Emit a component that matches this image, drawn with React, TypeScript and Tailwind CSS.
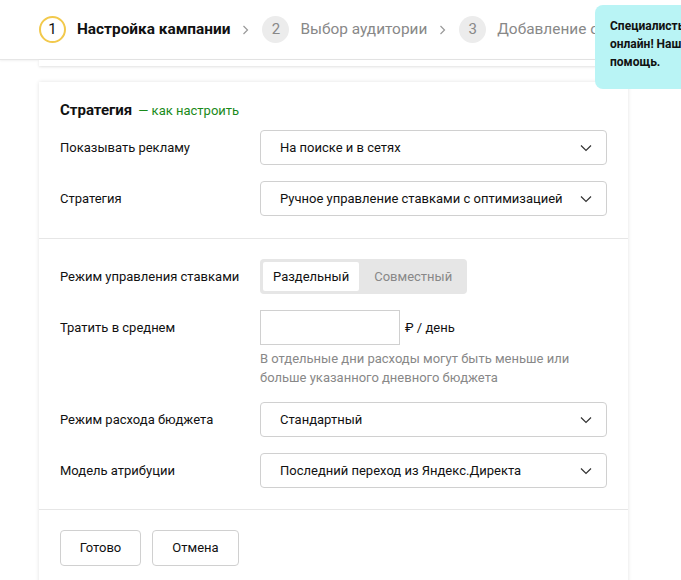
import React from 'react';

const Chevron = () => (
  <svg width="12" height="8" viewBox="0 0 12 8" fill="none" className="shrink-0">
    <path d="M1 1.5L6 6.5L11 1.5" stroke="#333" strokeWidth="1.2" />
  </svg>
);

const Select = ({ value }: { value: string }) => (
  <div className="flex h-[35px] w-[348px] items-center justify-between rounded-[4px] border border-[#d0d0d0] bg-white pl-[19px] pr-[14px] text-[13px] text-[#111]">
    <span>{value}</span>
    <Chevron />
  </div>
);

const Row = ({ label, children }: { label: string; children: React.ReactNode }) => (
  <div className="flex items-center">
    <div className="w-[200px] shrink-0 text-[13px] text-[#111]">{label}</div>
    {children}
  </div>
);

const Step = ({ n, text, active }: { n: number; text: string; active?: boolean }) => (
  <div className="flex shrink-0 items-center">
    <div
      className={
        active
          ? 'flex h-[27px] w-[27px] items-center justify-center rounded-full border-2 border-[#f2c94c] text-[15px] text-[#111]'
          : 'flex h-[27px] w-[27px] items-center justify-center rounded-full bg-[#ececec] text-[15px] text-[#888]'
      }
    >
      {n}
    </div>
    <span className={active ? 'ml-[11px] text-[15.4px] font-bold text-[#111]' : 'ml-[11px] text-[15.4px] text-[#888]'}>
      {text}
    </span>
  </div>
);

const Sep = () => (
  <svg width="7" height="10" viewBox="0 0 7 10" fill="none" className="ml-[12px] mr-[13px] shrink-0">
    <path d="M1.5 1L5.5 5L1.5 9" stroke="#999" strokeWidth="1.2" />
  </svg>
);

export default function App() {
  return (
    <div
      className="relative h-[580px] w-[681px] overflow-hidden bg-white"
      style={{ fontFamily: 'Roboto, "Noto Sans", sans-serif' }}
    >
      {/* header steps */}
      <div className="flex h-[60px] items-center overflow-hidden border-b border-[#e6e6e6] pl-[39px] shadow-[0_1px_2px_rgba(0,0,0,0.06)]">
        <Step n={1} text="Настройка кампании" active />
        <Sep />
        <Step n={2} text="Выбор аудитории" />
        <Sep />
        <Step n={3} text="Добавление объявлений" />
      </div>

      {/* tail of previous card */}
      <div className="mx-[39px] h-[6px] w-[589px] bg-white shadow-[0_1px_3px_rgba(0,0,0,0.12)]" />

      {/* main card */}
      <div className="ml-[39px] mt-[16px] w-[589px] bg-white shadow-[0_0_4px_rgba(0,0,0,0.12)]">
        <div className="px-[21px] pb-[22px] pt-[17px]">
          <div className="flex h-[20px] items-baseline">
            <span className="text-[15px] font-bold text-[#111]">Стратегия</span>
            <span className="ml-[6px] text-[13px] text-[#1a8a1a]">— как настроить</span>
          </div>
          <div className="mt-[11px] flex flex-col gap-[16px]">
            <Row label="Показывать рекламу">
              <Select value="На поиске и в сетях" />
            </Row>
            <Row label="Стратегия">
              <Select value="Ручное управление ставками с оптимизацией" />
            </Row>
          </div>
        </div>

        <div className="border-t border-[#e6e6e6] px-[21px] pb-[21px] pt-[20px]">
          <Row label="Режим управления ставками">
            <div className="flex h-[35px] items-center rounded-[4px] bg-[#e6e6e6] p-[3px] text-[13px]">
              <div className="flex h-[29px] items-center rounded-[2px] bg-white px-[10px] text-[#111]">Раздельный</div>
              <div className="flex h-[29px] items-center pl-[15px] pr-[12px] text-[#888]">Совместный</div>
            </div>
          </Row>

          <div className="mt-[16px] flex">
            <div className="flex h-[35px] w-[200px] shrink-0 items-center text-[13px] text-[#111]">Тратить в среднем</div>
            <div>
              <div className="flex items-center">
                <div className="h-[35px] w-[140px] border border-[#d0d0d0] bg-white" />
                <span className="ml-[5px] text-[13px] text-[#111]">₽ / день</span>
              </div>
              <div className="mt-[4px] text-[13px] leading-[19px] text-[#888]">
                В отдельные дни расходы могут быть меньше или
                <br />
                больше указанного дневного бюджета
              </div>
            </div>
          </div>

          <div className="mt-[15px] flex flex-col gap-[16px]">
            <Row label="Режим расхода бюджета">
              <Select value="Стандартный" />
            </Row>
            <Row label="Модель атрибуции">
              <Select value="Последний переход из Яндекс.Директа" />
            </Row>
          </div>
        </div>

        <div className="flex gap-[11px] border-t border-[#e6e6e6] px-[21px] pb-[20px] pt-[20px]">
          <button className="h-[36px] w-[81px] rounded-[4px] border border-[#d0d0d0] bg-white text-[13px] text-[#111]">Готово</button>
          <button className="h-[36px] w-[87px] rounded-[4px] border border-[#d0d0d0] bg-white text-[13px] text-[#111]">Отмена</button>
        </div>
      </div>

      {/* chat tooltip */}
      <div className="absolute left-[595px] top-[5px] h-[84px] w-[86px] overflow-hidden rounded-l-[8px] bg-[#b9f4f5] pl-[15px] pt-[12px] text-[12px] font-bold leading-[18px] text-[#111]">
        <div className="whitespace-nowrap">Специалисты</div>
        <div className="whitespace-nowrap">онлайн! Наши</div>
        <div className="whitespace-nowrap">помощь.</div>
      </div>
    </div>
  );
}
